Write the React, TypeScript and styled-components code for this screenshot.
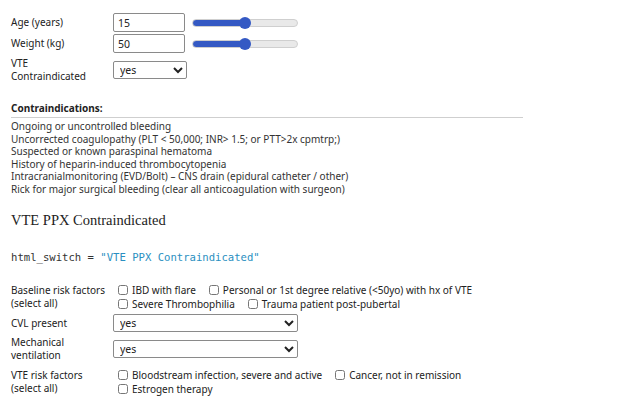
import {useState} from 'react';
import styled, {createGlobalStyle} from 'styled-components';

const GlobalStyle = createGlobalStyle`
  html, body {
    margin: 0;
    padding: 0;
    background: #fff;
  }
  body {
    font-family: 'Noto Sans', 'Open Sans', sans-serif;
    font-size: 10px;
    color: #222;
  }
`;

const Page = styled.div`
  width: 640px;
  height: 400px;
  overflow: hidden;
  padding: 13px 0 0 11px;
  box-sizing: border-box;
`;

const FieldRow = styled.div<{$gap?: number}>`
  display: grid;
  grid-template-columns: 102px auto;
  align-items: center;
  margin-bottom: ${(p) => p.$gap ?? 2}px;
`;

const Label = styled.div`
  line-height: 13px;
`;

const Controls = styled.div`
  display: flex;
  align-items: center;
  gap: 7px;
`;

const NumberBox = styled.input`
  width: 72px;
  height: 19px;
  box-sizing: border-box;
  border: 1px solid #8a8a8a;
  border-radius: 2px;
  padding: 0 4px;
  font: inherit;
  font-size: 10.5px;
  color: #222;
`;

const Slider = styled.input`
  -webkit-appearance: none;
  appearance: none;
  width: 106px;
  height: 8px;
  margin: 0;
  border-radius: 4px;
  border: 1px solid #cfcfcf;
  box-sizing: border-box;
  outline: none;

  &::-webkit-slider-thumb {
    -webkit-appearance: none;
    width: 12px;
    height: 12px;
    border-radius: 50%;
    background: #3459c4;
    border: none;
  }
`;

const Select = styled.select<{$width: number}>`
  width: ${(p) => p.$width}px;
  height: 18px;
  box-sizing: border-box;
  border: 1px solid #8a8a8a;
  border-radius: 2px;
  padding: 0 2px;
  font: inherit;
  font-size: 10.5px;
  color: #222;
  background: #fff;
`;

const SectionTitle = styled.div`
  font-weight: 700;
  margin-top: 18px;
  line-height: 14px;
`;

const Rule = styled.div`
  width: 512px;
  height: 1px;
  background: #cfcfcf;
  margin: 2px 0 2px;
`;

const List = styled.div`
  line-height: 12.5px;
  color: #333;
`;

const Heading = styled.h3`
  font-family: 'Liberation Serif', 'DejaVu Serif', serif;
  font-weight: 400;
  font-size: 14.5px;
  margin: 15px 0 0;
  line-height: 20px;
  color: #222;
`;

const Code = styled.pre`
  font-family: 'DejaVu Sans Mono', 'Liberation Mono', monospace;
  font-size: 10.6px;
  margin: 20px 0 0;
  line-height: 14px;
  color: #333;

  span {
    color: #2a8fc1;
  }
`;

const Form = styled.div`
  margin-top: 19px;
`;

const Checks = styled.div`
  display: flex;
  flex-wrap: wrap;
  column-gap: 13px;
  row-gap: 1px;
  padding-left: 5px;
`;

const CheckOption = styled.label`
  display: flex;
  align-items: center;
  gap: 4px;
  line-height: 14px;
  white-space: nowrap;
`;

const Box = styled.input`
  width: 10px;
  height: 10px;
  margin: 0;
`;

function CheckGroup({options}: {options: string[][]}) {
  return (
    <div>
      {options.map((row, i) => (
        <Checks key={i}>
          {row.map((o) => (
            <CheckOption key={o}>
              <Box type="checkbox" />
              {o}
            </CheckOption>
          ))}
        </Checks>
      ))}
    </div>
  );
}

function RangeField({
  label,
  value,
  max,
  gap,
}: {
  label: string;
  value: number;
  max: number;
  gap?: number;
}) {
  const [v, setV] = useState(value);
  const pct = (v / max) * 100;
  return (
    <FieldRow $gap={gap}>
      <Label>{label}</Label>
      <Controls>
        <NumberBox value={v} onChange={(e) => setV(Number(e.target.value))} />
        <Slider
          type="range"
          min={0}
          max={max}
          value={v}
          onChange={(e) => setV(Number(e.target.value))}
          style={{
            background: `linear-gradient(to right, #3459c4 ${pct}%, #e9e9e9 ${pct}%)`,
          }}
        />
      </Controls>
    </FieldRow>
  );
}

const contraindications = [
  'Ongoing or uncontrolled bleeding',
  'Uncorrected coagulopathy (PLT < 50,000; INR> 1.5; or PTT>2x cpmtrp;)',
  'Suspected or known paraspinal hematoma',
  'History of heparin-induced thrombocytopenia',
  'Intracranialmonitoring (EVD/Bolt) \u2013 CNS drain (epidural catheter / other)',
  'Rick for major surgical bleeding (clear all anticoagulation with surgeon)',
];

export default function App() {
  return (
    <Page>
      <GlobalStyle />
      <RangeField label="Age (years)" value={15} max={30} />
      <RangeField label="Weight (kg)" value={50} max={100} gap={4} />
      <FieldRow>
        <Label>
          VTE
          <br />
          Contraindicated
        </Label>
        <Controls>
          <Select $width={74} defaultValue="yes">
            <option value="yes">yes</option>
            <option value="no">no</option>
          </Select>
        </Controls>
      </FieldRow>

      <SectionTitle>Contraindications:</SectionTitle>
      <Rule />
      <List>
        {contraindications.map((c) => (
          <div key={c}>{c}</div>
        ))}
      </List>

      <Heading>VTE PPX Contraindicated</Heading>
      <Code>
        html_switch = <span>"VTE PPX Contraindicated"</span>
      </Code>

      <Form>
        <FieldRow $gap={3}>
          <Label>
            Baseline risk factors
            <br />
            (select all)
          </Label>
          <CheckGroup
            options={[
              ['IBD with flare', 'Personal or 1st degree relative (<50yo) with hx of VTE'],
              ['Severe Thrombophilia', 'Trauma patient post-pubertal'],
            ]}
          />
        </FieldRow>
        <FieldRow $gap={4}>
          <Label>CVL present</Label>
          <Select $width={185} defaultValue="yes">
            <option value="yes">yes</option>
            <option value="no">no</option>
          </Select>
        </FieldRow>
        <FieldRow $gap={6}>
          <Label>
            Mechanical
            <br />
            ventilation
          </Label>
          <Select $width={185} defaultValue="yes">
            <option value="yes">yes</option>
            <option value="no">no</option>
          </Select>
        </FieldRow>
        <FieldRow>
          <Label>
            VTE risk factors
            <br />
            (select all)
          </Label>
          <CheckGroup
            options={[
              ['Bloodstream infection, severe and active', 'Cancer, not in remission'],
              ['Estrogen therapy'],
            ]}
          />
        </FieldRow>
      </Form>
    </Page>
  );
}
